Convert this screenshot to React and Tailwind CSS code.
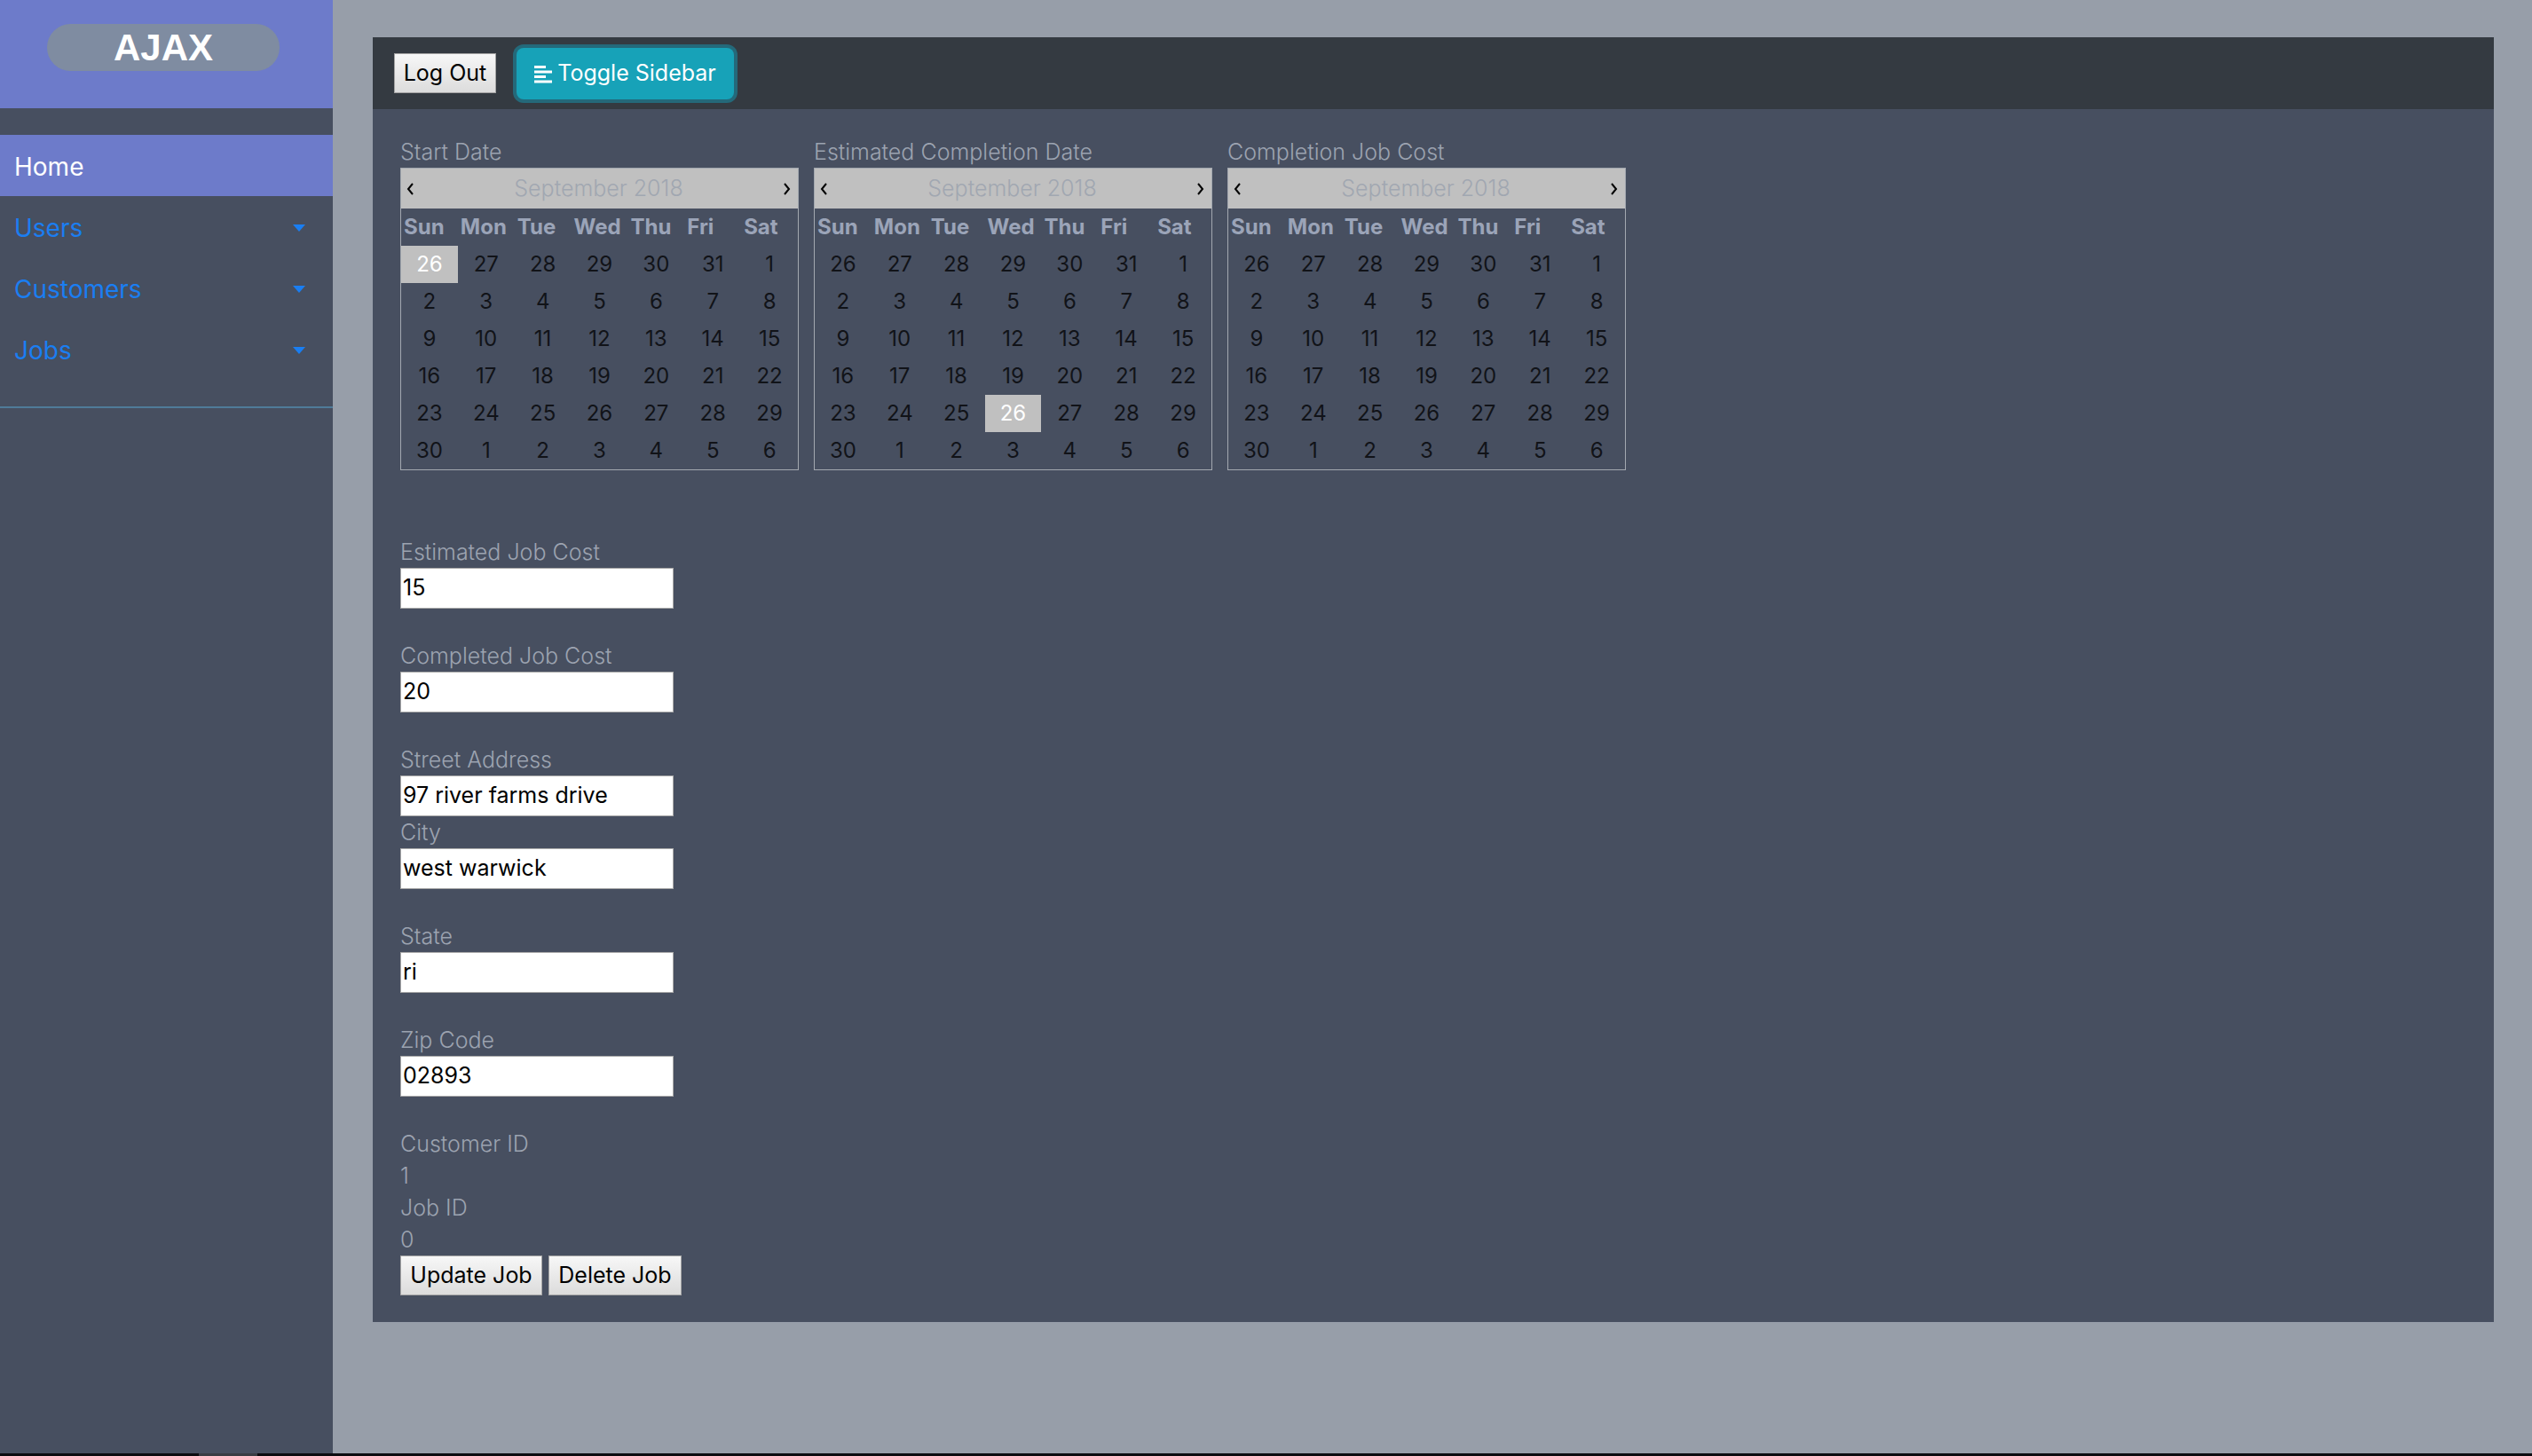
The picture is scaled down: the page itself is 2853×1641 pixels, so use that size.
import React from 'react';

const FONT = { fontFamily: 'Inter, "Noto Sans", sans-serif' };

const WEEKDAYS = ['Sun', 'Mon', 'Tue', 'Wed', 'Thu', 'Fri', 'Sat'];

const DAYS = [
  26, 27, 28, 29, 30, 31, 1,
  2, 3, 4, 5, 6, 7, 8,
  9, 10, 11, 12, 13, 14, 15,
  16, 17, 18, 19, 20, 21, 22,
  23, 24, 25, 26, 27, 28, 29,
  30, 1, 2, 3, 4, 5, 6,
];

const Caret = () => (
  <svg width="14" height="8" viewBox="0 0 14 8" className="fill-[#1a7ef2]">
    <path d="M0 0h14L7 8z" />
  </svg>
);

const AlignIcon = () => (
  <svg width="21" height="22" viewBox="0 0 21 22" className="fill-white">
    <rect x="0" y="2" width="13" height="3" />
    <rect x="0" y="7.5" width="20" height="3" />
    <rect x="0" y="13" width="13" height="3" />
    <rect x="0" y="18.5" width="20" height="3" />
  </svg>
);

const Chevron = ({ dir }) => (
  <svg width="9" height="14" viewBox="0 0 9 14" className="stroke-black fill-none" strokeWidth="2">
    <path d={dir === 'left' ? 'M7 1L2 7l5 6' : 'M2 1l5 6-5 6'} />
  </svg>
);

const Calendar = ({ label, selected }) => (
  <div className="w-[449px]">
    <div className="h-9 leading-9 text-[25px] font-light text-[#9ca3b0] whitespace-nowrap">{label}</div>
    <div className="border border-[#a3a8b0]">
      <div className="h-[45px] bg-[#c0c0c0] flex items-center justify-between pl-[6px] pr-[8px]">
        <Chevron dir="left" />
        <span className="text-[25px] font-light text-[#a1a7b1]">September 2018</span>
        <Chevron dir="right" />
      </div>
      <div className="grid grid-cols-7 h-[42px] items-center">
        {WEEKDAYS.map((d) => (
          <div key={d} className="pl-[3px] text-[24px] font-bold text-[#9ba4b8]">
            {d}
          </div>
        ))}
      </div>
      <div className="grid grid-cols-7">
        {DAYS.map((d, i) => (
          <div
            key={i}
            className={`h-[42px] flex items-center justify-center text-[24px] ${
              i === selected ? 'bg-[#c0c0c0] text-white' : 'text-[#111318]'
            }`}
          >
            {d}
          </div>
        ))}
      </div>
    </div>
  </div>
);

const Label = ({ children }) => (
  <div className="h-9 leading-9 text-[25px] font-light text-[#9ca3b0]">{children}</div>
);

const Field = ({ label, value }) => (
  <div>
    <Label>{label}</Label>
    <div className="w-[308px] h-[46px] bg-white border border-[#a8a8a8] flex items-center px-[2px] text-[25px] text-black">
      {value}
    </div>
  </div>
);

const GrayButton = ({ children, className = '' }) => (
  <button
    className={`h-[45px] px-0 border border-[#a5a5a5] bg-gradient-to-b from-[#f7f7f7] to-[#dcdcdc] text-black text-[25px] leading-none ${className}`}
  >
    {children}
  </button>
);

export default function App() {
  return (
    <div className="w-full h-[1641px] flex flex-col bg-[#979ea9] overflow-hidden" style={FONT}>
      <div className="flex flex-1">
        {/* Sidebar */}
        <aside className="w-[375px] bg-[#474f60] flex flex-col">
          <div className="h-[122px] bg-[#6d7bca] pt-[27px]">
            <div
              className="w-[262px] h-[53px] ml-[53px] rounded-full bg-[#7f8ca1] flex items-center justify-center text-white text-[42px] font-bold"
              style={{ fontFamily: '"Liberation Sans", Arial, sans-serif' }}
            >
              AJAX
            </div>
          </div>
          <nav className="mt-[30px] pb-[30px] border-b-2 border-[#4f7b99]">
            <div className="h-[69px] bg-[#6d7bca] flex items-center pl-4 pt-[2px] text-[28px] text-white">Home</div>
            {['Users', 'Customers', 'Jobs'].map((item) => (
              <div key={item} className="h-[69px] flex items-center justify-between pl-4 pr-[31px] pt-[2px] text-[28px] text-[#1a7ef2]">
                <span>{item}</span>
                <Caret />
              </div>
            ))}
          </nav>
        </aside>

        {/* Main */}
        <main className="flex-1 pl-[45px] pr-[43px] pt-[42px]">
          <div className="bg-[#474f60]">
            <div className="h-[81px] bg-[#343a41] flex items-center px-6 gap-[23px]">
              <GrayButton className="w-[115px]">Log Out</GrayButton>
              <button className="h-[58px] w-[245px] rounded-lg bg-[#17a2b8] ring-4 ring-[#24697a] flex items-center justify-center gap-[5px] text-white text-[25px]">
                <AlignIcon />
                Toggle Sidebar
              </button>
            </div>

            <div className="pl-[31px] pt-[30px] pb-[30px]">
              <div className="flex gap-[17px]">
                <Calendar label="Start Date" selected={0} />
                <Calendar label="Estimated Completion Date" selected={31} />
                <Calendar label="Completion Job Cost" selected={-1} />
              </div>

              <div className="mt-[74px] flex flex-col">
                <Field label="Estimated Job Cost" value="15" />
                <div className="h-[35px]" />
                <Field label="Completed Job Cost" value="20" />
                <div className="h-[35px]" />
                <Field label="Street Address" value="97 river farms drive" />
                <Field label="City" value="west warwick" />
                <div className="h-[35px]" />
                <Field label="State" value="ri" />
                <div className="h-[35px]" />
                <Field label="Zip Code" value="02893" />
                <div className="h-[35px]" />
                <Label>Customer ID</Label>
                <Label>1</Label>
                <Label>Job ID</Label>
                <Label>0</Label>
                <div className="flex gap-[7px]">
                  <GrayButton className="w-[160px]">Update Job</GrayButton>
                  <GrayButton className="w-[150px]">Delete Job</GrayButton>
                </div>
              </div>
            </div>
          </div>
        </main>
      </div>
      <div className="h-[3px] bg-[#0c0c10] flex">
        <div className="ml-[224px] w-[66px] bg-[#3a3d44]" />
      </div>
    </div>
  );
}
